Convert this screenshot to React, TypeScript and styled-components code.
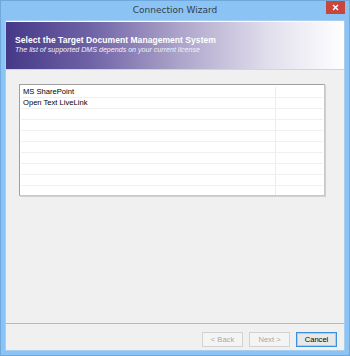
import React from 'react';
import styled, { createGlobalStyle } from 'styled-components';

const GlobalStyle = createGlobalStyle`
  html, body {
    margin: 0;
    padding: 0;
    background: #8cc3f5;
  }
  * {
    box-sizing: border-box;
  }
`;

const Window = styled.div`
  width: 350px;
  height: 356px;
  display: flex;
  flex-direction: column;
  background: #8cc3f5;
  border: 1px solid #6fa8dc;
  font-family: 'Liberation Sans', Arial, sans-serif;
  overflow: hidden;
`;

const TitleBar = styled.div`
  height: 19px;
  display: flex;
  align-items: flex-start;
  justify-content: center;
  position: relative;
`;

const Title = styled.div`
  font-family: 'DejaVu Sans', 'Liberation Sans', sans-serif;
  font-size: 9px;
  color: #333d4a;
  margin-top: 4px;
`;

const CloseButton = styled.div`
  position: absolute;
  top: -1px;
  right: 4px;
  width: 19px;
  height: 14px;
  background: #c9463d;
  display: flex;
  align-items: center;
  justify-content: center;
`;

const Client = styled.div`
  flex: 1;
  margin: 0 4px 4px 4px;
  background: #f0f0f0;
  border: 1px solid #a9cdef;
  display: flex;
  flex-direction: column;
`;

const Banner = styled.div`
  height: 49px;
  border-top: 1px solid #ffffff;
  border-bottom: 1px solid #d4d4d4;
  background: linear-gradient(90deg, #453887 0%, #6f63a6 25%, #aea6cb 52%, #e2dfed 78%, #ffffff 100%);
  display: flex;
  flex-direction: column;
  justify-content: center;
  padding: 0 0 3px 9px;
  color: #ffffff;
`;

const BannerTitle = styled.div`
  font-weight: bold;
  font-size: 8.5px;
  letter-spacing: 0.05px;
`;

const BannerSubtitle = styled.div`
  font-style: italic;
  font-size: 7.1px;
  margin-top: 1px;
  color: #f2f0f8;
`;

const Body = styled.div`
  flex: 1;
  padding: 14px 0 0 13px;
`;

const ListBox = styled.div`
  width: 306px;
  height: 112px;
  background: #ffffff;
  border: 1px solid #a0a0a0;
  border-right-color: #c8c8c8;
  border-bottom-color: #c8c8c8;
  box-shadow: 1px 1px 0 #d0d0d0;
  padding: 2px 1px 1px 1px;
  overflow: hidden;
`;

const Row = styled.div`
  height: 11px;
  display: grid;
  grid-template-columns: 255px 1fr;
  border-bottom: 1px solid #f0f0f0;
`;

const Cell = styled.div<{ $last?: boolean }>`
  font-size: 7.6px;
  line-height: 10px;
  color: #000000;
  padding-left: 2px;
  border-right: ${({ $last }) => ($last ? 'none' : '1px solid #ececec')};
  white-space: nowrap;
`;

const Footer = styled.div`
  border-top: 1px solid #b8b8b8;
  height: 27px;
  display: flex;
  justify-content: flex-end;
  align-items: flex-start;
  gap: 6px;
  padding: 8px 7px 0 0;
`;

const Button = styled.div<{ $disabled?: boolean; $focused?: boolean }>`
  width: 41px;
  height: 15px;
  display: flex;
  align-items: center;
  justify-content: center;
  font-size: 7.6px;
  color: ${({ $disabled }) => ($disabled ? '#a8a8a8' : '#000000')};
  background: ${({ $disabled }) => ($disabled ? '#f4f4f4' : '#e8e8e8')};
  border: 1px solid ${({ $disabled, $focused }) =>
    $focused ? '#3c8fdb' : $disabled ? '#d2d2d2' : '#adadad'};
  box-shadow: ${({ $focused }) => ($focused ? 'inset 0 0 0 1px #a6d0f5' : 'none')};
`;

const items = ['MS SharePoint', 'Open Text LiveLink'];
const ROW_COUNT = 10;

export default function App() {
  const rows = Array.from({ length: ROW_COUNT }, (_, i) => items[i] || '');

  return (
    <>
      <GlobalStyle />
      <Window>
        <TitleBar>
          <Title>Connection Wizard</Title>
          <CloseButton>
            <svg width="7" height="7" viewBox="0 0 7 7">
              <path d="M1 1 L6 6 M6 1 L1 6" stroke="#ffffff" strokeWidth="1.4" />
            </svg>
          </CloseButton>
        </TitleBar>
        <Client>
          <Banner>
            <BannerTitle>Select the Target Document Management System</BannerTitle>
            <BannerSubtitle>The list of supported DMS depends on your current license</BannerSubtitle>
          </Banner>
          <Body>
            <ListBox>
              {rows.map((text, i) => (
                <Row key={i}>
                  <Cell>{text}</Cell>
                  <Cell $last />
                </Row>
              ))}
            </ListBox>
          </Body>
          <Footer>
            <Button $disabled>&lt; Back</Button>
            <Button $disabled>Next &gt;</Button>
            <Button $focused>Cancel</Button>
          </Footer>
        </Client>
      </Window>
    </>
  );
}
